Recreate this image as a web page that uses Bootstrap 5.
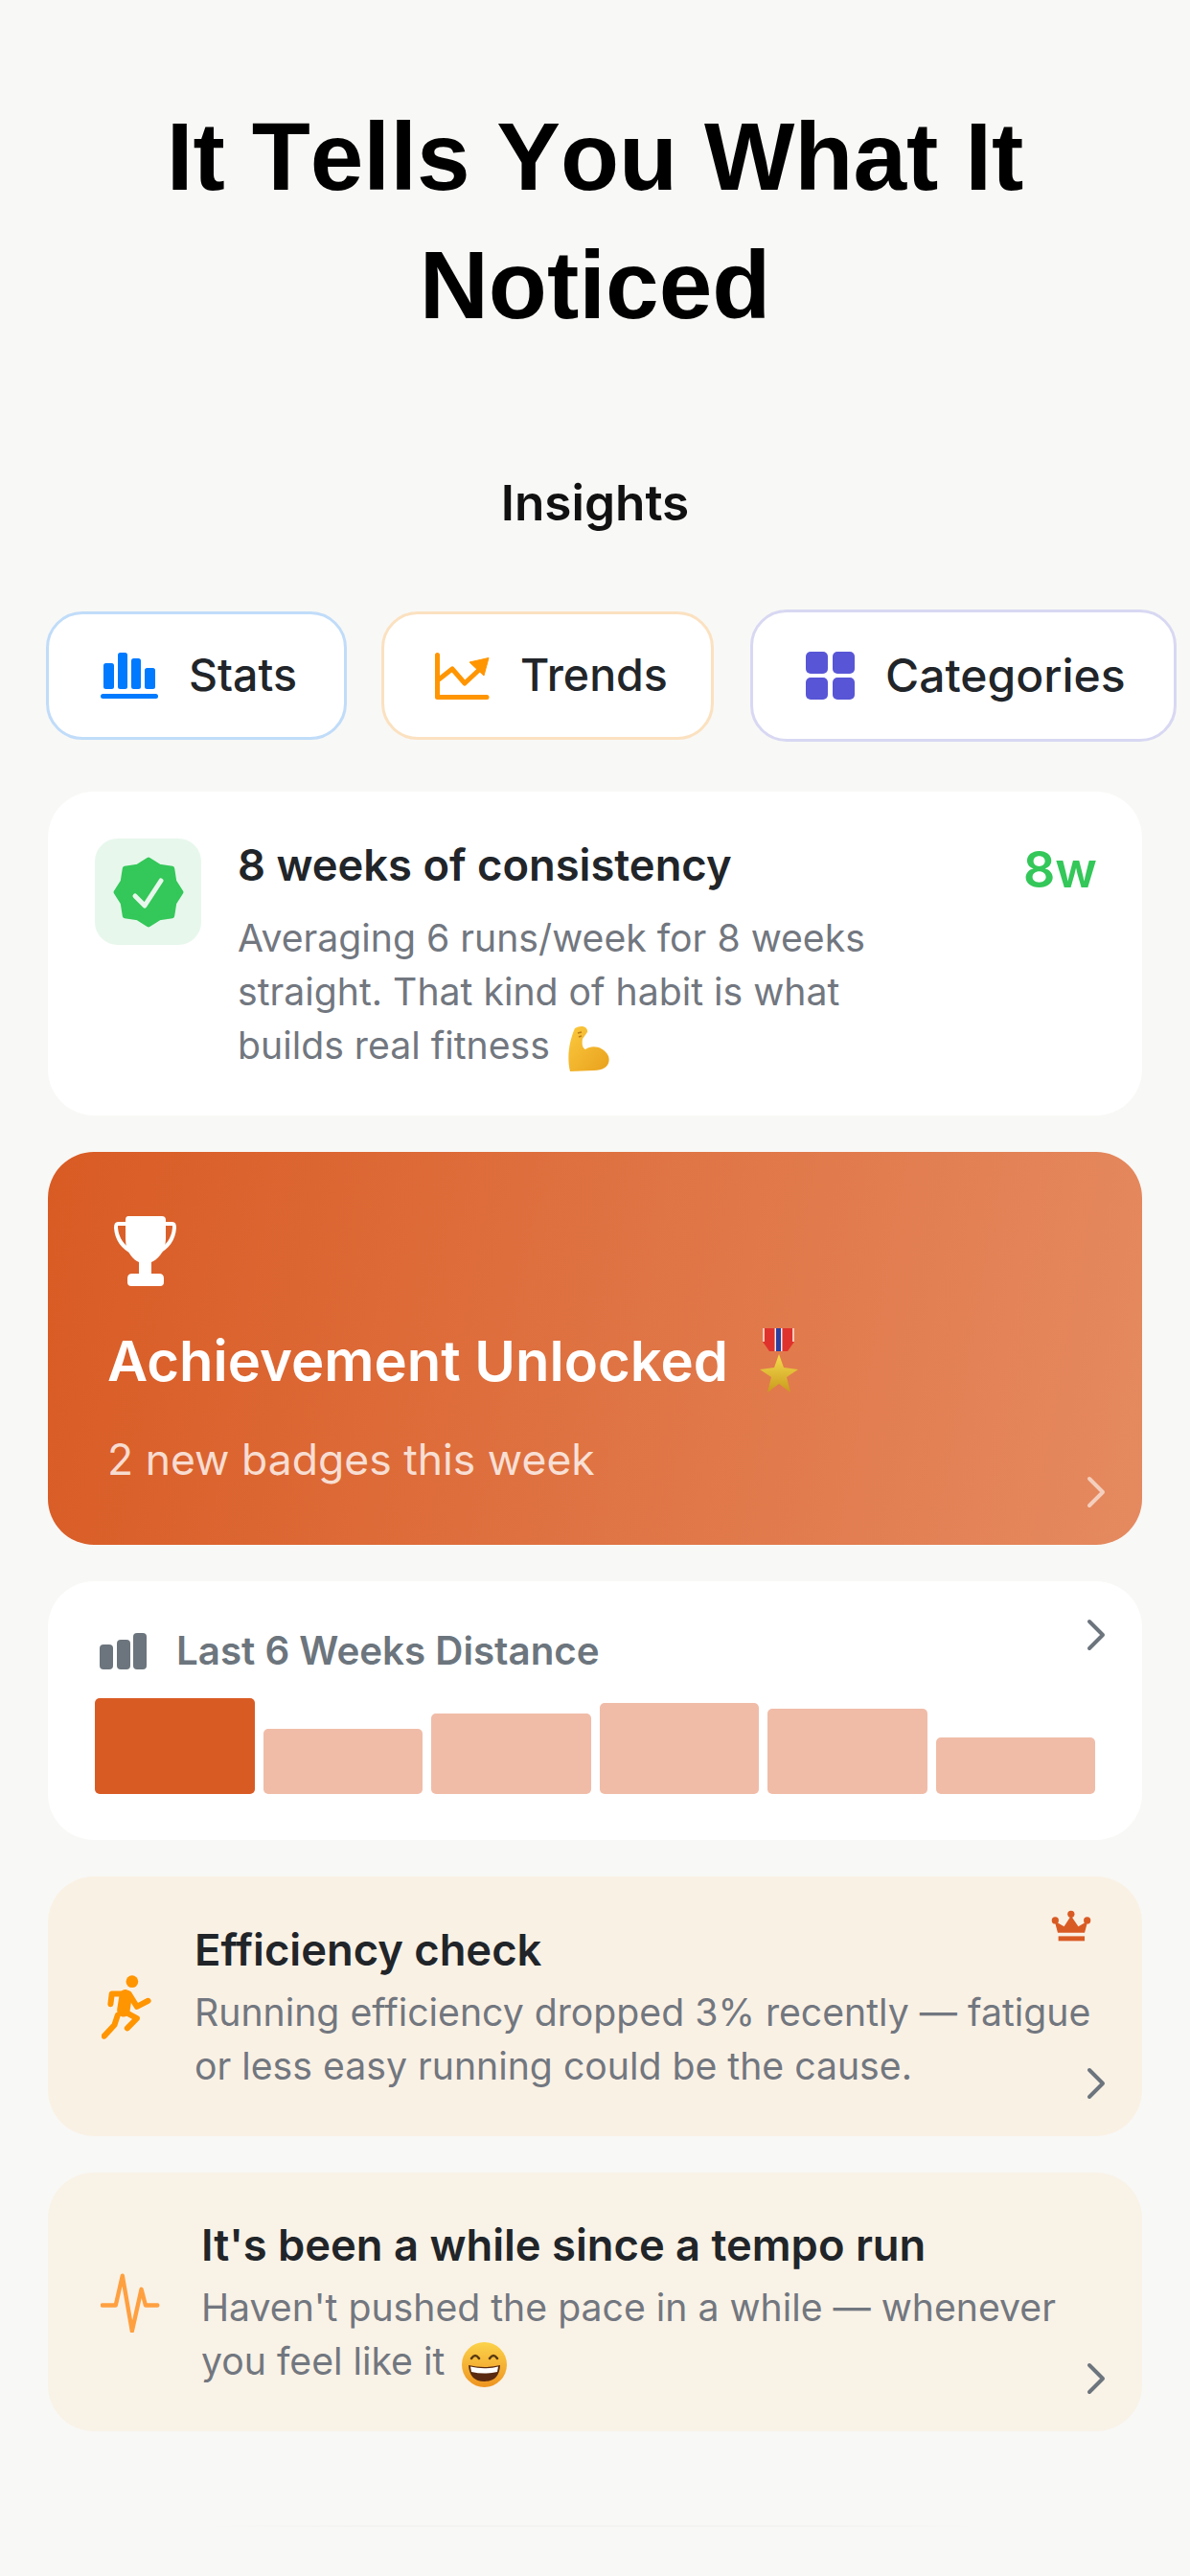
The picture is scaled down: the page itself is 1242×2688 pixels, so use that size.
<!DOCTYPE html>
<html lang="en">
<head>
  <meta charset="UTF-8" />
  <meta name="viewport" content="width=device-width, initial-scale=1.0"/>
  <title>Insights</title>
  <link href="https://cdn.jsdelivr.net/npm/bootstrap@5.3.3/dist/css/bootstrap.min.css" rel="stylesheet" />
  <style>
    body { background: #f8f8f6; font-family: Inter, "Liberation Sans", sans-serif; color: #212529; height: 2688px; overflow: hidden; }

    .hero-title { font-family: "Liberation Sans", Arial, sans-serif; font-weight: 700; font-size: 100px; line-height: 134px; color: #000; margin: 0; padding-top: 96px; font-kerning: none; }
    .page-label { font-size: 51.3px; font-weight: 600; line-height: 60px; color: #111; margin: 130px 0 82px; }

    .chip-row { padding-left: 48px; height: 138px; gap: 36px; }
    .chip { background: #fff; border: 3px solid; border-radius: 38px; height: 134px; font-size: 46.5px; font-weight: 500; gap: 32px; }
    .chip-stats { border-color: #c0dcf9; width: 314px; padding-left: 54px; }
    .chip-trends { border-color: #fbe1c0; width: 347px; padding-left: 53px; }
    .chip-cats { border-color: #d8d8f3; width: 445px; height: 138px; padding-left: 55px; margin-left: 2px; font-size: 48px; }

    .card-stack { margin: 52px 50px 0; gap: 38px; }
    .soft-card { border: 0; border-radius: 48px; background: #fff; position: relative; }

    .streak-card { padding: 49px 47px 45px 49px; gap: 38px; }
    .streak-tile { width: 111px; height: 111px; background: #e7f7ec; border-radius: 24px; flex: none; }
    .streak-text { width: 680px; }
    .item-title { font-size: 45.3px; font-weight: 600; line-height: 56px; color: #212529; }
    .item-desc { font-size: 39.2px; line-height: 56px; color: #72777f; }
    .streak-desc { margin-top: 20px; }
    .streak-value { font-size: 52px; font-weight: 600; line-height: 64px; color: #34c759; margin-top: 1px; }

    .badge-card { background: linear-gradient(100deg, #d95b24, #e58a60) !important; padding: 67px 62px 64px; color: #fff; }
    .badge-trophy { margin-left: 7px; display: block; }
    .badge-title { font-size: 58px; font-weight: 600; line-height: 70px; margin-top: 43px; gap: 33px; }
    .badge-sub { font-size: 44.5px; line-height: 50px; margin-top: 43px; color: rgba(255,255,255,.78); }

    .chart-card { padding: 53px 49px 48px; }
    .chart-head { height: 40px; padding-left: 5px; gap: 31px; font-size: 40.3px; font-weight: 600; color: #6c757d; }
    .chart-bars { height: 100px; margin-top: 29px; gap: 9px; }
    .chart-bar { flex: 1; background: #f0bca8; border-radius: 5px; }
    .chart-bar-now { background: #d95b24; }

    .tip-card { background: #faf1e5; padding: 52px 50px 45px 56px; gap: 45px; }
    .tip-card-alt { background: #f9f2e7; padding: 51px 50px 45px 55px; gap: 43px; }
    .tip-card .item-title { line-height: 50px; }
    .tip-card .item-desc { margin-top: 12px; }
    .tip-icon { margin-bottom: 5px; }

    .go-arrow { position: absolute; right: 38px; width: 20px; height: 34px; }
    .crown-mark { position: absolute; right: 53px; top: 35px; }
    .inline-emoji { vertical-align: middle; margin-left: 5px; }
    .bottom-fade { height: 2px; margin: 98px 220px 0; background: linear-gradient(90deg, transparent, #f3f3f1 20%, #f3f3f1 80%, transparent); }
  </style>
</head>
<body>
  <main>
    <h1 class="hero-title text-center">It Tells You What It Noticed</h1>
    <div class="page-label text-center">Insights</div>

    <!-- chips -->
    <div class="chip-row d-flex align-items-center">
      <div class="chip chip-stats d-flex align-items-center">
        <svg class="flex-shrink-0" width="60" height="48" viewBox="0 0 60 48" fill="#007aff"><rect x="3" y="11" width="11" height="27" rx="2.5"/><rect x="18" y="0" width="10" height="38" rx="2.5"/><rect x="32" y="6" width="10" height="32" rx="2.5"/><rect x="46" y="16" width="11" height="22" rx="2.5"/><rect x="0" y="43" width="60" height="5" rx="2.5"/></svg>
        <span>Stats</span>
      </div>
      <div class="chip chip-trends d-flex align-items-center">
        <svg class="flex-shrink-0" width="57" height="49" viewBox="0 0 57 49"><path d="M2.5 2.5V46.5H54" fill="none" stroke="#ff9500" stroke-width="5" stroke-linecap="round" stroke-linejoin="round"/><path d="M4 28L18 17L31 32L46 18" fill="none" stroke="#ff9500" stroke-width="5" stroke-linecap="round" stroke-linejoin="round"/><path d="M36 10L56 5.5L51 24Z" fill="#ff9500" stroke="#ff9500" stroke-width="1" stroke-linejoin="round"/></svg>
        <span>Trends</span>
      </div>
      <div class="chip chip-cats d-flex align-items-center">
        <svg class="flex-shrink-0" width="51" height="50" viewBox="0 0 51 50" fill="#5856d6"><rect width="23" height="23" rx="5"/><rect x="28" width="23" height="23" rx="5"/><rect y="27" width="23" height="23" rx="5"/><rect x="28" y="27" width="23" height="23" rx="5"/></svg>
        <span>Categories</span>
      </div>
    </div>

    <div class="card-stack d-flex flex-column">
      <!-- streak -->
      <div class="card soft-card streak-card flex-row align-items-start">
        <div class="streak-tile d-flex align-items-center justify-content-center">
          <svg width="76" height="76" viewBox="0 0 76 76"><path d="M72 38L64.8 49.1L62.7 62.7L49.1 64.8L38 72L26.9 64.8L13.3 62.7L11.2 49.1L4 38L11.2 26.9L13.3 13.3L26.9 11.2L38 4L49.1 11.2L62.7 13.3L64.8 26.9Z" fill="#34c759" stroke="#34c759" stroke-width="5" stroke-linejoin="round"/><path d="M24 42L34 52L51 26" fill="none" stroke="#e7f7ec" stroke-width="5" stroke-linecap="round" stroke-linejoin="round"/></svg>
        </div>
        <div class="streak-text">
          <div class="item-title">8 weeks of consistency</div>
          <div class="item-desc streak-desc">Averaging 6 runs/week for 8 weeks straight. That kind of habit is what builds real fitness
            <svg class="inline-emoji" width="48" height="48" viewBox="0 0 48 48"><defs><linearGradient id="armGrad" x1="0" y1="0" x2="1" y2="1"><stop offset="0" stop-color="#fbc93d"/><stop offset="1" stop-color="#e9a11d"/></linearGradient></defs><path d="M10 3C16 -1 24 1 23 7L18 14C17 20 18 24 21 25C28 20 40 22 45 32C48 42 40 47 30 47L5 48C1 32 5 14 10 3Z" fill="url(#armGrad)"/><path d="M13 8L17 7M14 12L17 11" stroke="#b97c12" stroke-width="1.5"/></svg>
          </div>
        </div>
        <div class="streak-value ms-auto">8w</div>
      </div>

      <!-- achievement -->
      <div class="card soft-card badge-card">
        <svg class="badge-trophy" width="65" height="73" viewBox="0 0 65 73"><path d="M15 0H50Q54 0 54 4V24C54 38 44 46 39 48V60H47Q52 60 52 65V69Q52 73 48 73H18Q14 73 14 69V65Q14 60 19 60H26V48C21 46 12 38 12 24V4Q12 0 15 0Z" fill="#fff"/><path d="M13 8H4C2 8 2 10 2 12C3 26 12 34 20 38M52 8H61C63 8 63 10 63 12C62 26 53 34 45 38" fill="none" stroke="#fff" stroke-width="4" stroke-linecap="round"/></svg>
        <div class="badge-title d-flex align-items-center">
          <span>Achievement Unlocked</span>
          <svg class="flex-shrink-0" width="40" height="68" viewBox="0 0 40 68"><defs><linearGradient id="starGrad" x1="0" y1="0" x2="0" y2="1"><stop offset="0" stop-color="#f6dc4e"/><stop offset="1" stop-color="#c99a1d"/></linearGradient></defs><path d="M3 0H36V14L29 24H10L3 14Z" fill="#e0322c"/><rect x="3" width="2" height="14" fill="#f6c9b8"/><rect x="34" width="2" height="14" fill="#f6c9b8"/><rect x="15.5" width="8" height="24" fill="#f2e7e0"/><rect x="17" width="5" height="24" fill="#2b3f9e"/><path d="M20 27L25 41L40 43L28 51L32 67L20 58L8 67L12 51L0 43L15 41Z" fill="url(#starGrad)"/></svg>
        </div>
        <div class="badge-sub">2 new badges this week</div>
        <svg class="go-arrow" style="bottom:38px" viewBox="0 0 20 34"><path d="M3 3L17 17L3 31" fill="none" stroke="#fff" stroke-opacity=".6" stroke-width="4" stroke-linecap="round" stroke-linejoin="round"/></svg>
      </div>

      <!-- distance -->
      <div class="card soft-card chart-card">
        <div class="chart-head d-flex align-items-center">
          <svg class="flex-shrink-0" width="49" height="38" viewBox="0 0 49 38" fill="#6c757d"><rect y="12" width="14" height="26" rx="4"/><rect x="18" y="7" width="14" height="31" rx="4"/><rect x="35" width="14" height="38" rx="4"/></svg>
          <span>Last 6 Weeks Distance</span>
        </div>
        <div class="chart-bars d-flex align-items-end">
          <div class="chart-bar chart-bar-now" style="height:100px"></div>
          <div class="chart-bar" style="height:68px"></div>
          <div class="chart-bar" style="height:84px"></div>
          <div class="chart-bar" style="height:95px"></div>
          <div class="chart-bar" style="height:89px"></div>
          <div class="chart-bar" style="height:59px"></div>
        </div>
        <svg class="go-arrow" style="top:39px" viewBox="0 0 20 34"><path d="M3 3L17 17L3 31" fill="none" stroke="#6c757d" stroke-width="4" stroke-linecap="round" stroke-linejoin="round"/></svg>
      </div>

      <!-- efficiency -->
      <div class="card soft-card tip-card flex-row align-items-center">
        <svg class="flex-shrink-0 tip-icon" width="52" height="67" viewBox="50 60 155 200"><circle cx="145" cy="80" r="19" fill="#ff9500"/><g fill="none" stroke="#ff9500" stroke-linecap="round" stroke-linejoin="round"><path d="M125 125L118 170" stroke-width="40"/><path d="M78 150L82 118H135L160 158L195 140" stroke-width="18"/><path d="M100 185L90 215L58 250" stroke-width="18"/><path d="M115 170L160 195L130 225" stroke-width="18"/></g></svg>
        <div>
          <div class="item-title">Efficiency check</div>
          <div class="item-desc">Running efficiency dropped 3% recently — fatigue or less easy running could be the cause.</div>
        </div>
        <svg class="crown-mark" width="42" height="33" viewBox="50 70 125 100" fill="#d95b24"><circle cx="62" cy="103" r="11"/><circle cx="112" cy="83" r="11"/><circle cx="163" cy="103" r="11"/><path d="M70 142L60 105L90 122L112 88L135 122L165 105L155 142Z"/><rect x="72" y="153" width="83" height="15"/></svg>
        <svg class="go-arrow" style="bottom:38px" viewBox="0 0 20 34"><path d="M3 3L17 17L3 31" fill="none" stroke="#6c757d" stroke-width="4" stroke-linecap="round" stroke-linejoin="round"/></svg>
      </div>

      <!-- tempo -->
      <div class="card soft-card tip-card tip-card-alt flex-row align-items-center">
        <svg class="flex-shrink-0 tip-icon" width="62" height="62" viewBox="45 60 185 185"><path d="M50 160H92L113 68L143 240L172 110L185 160H222" fill="none" stroke="#ffa040" stroke-width="13" stroke-linecap="round" stroke-linejoin="round"/></svg>
        <div>
          <div class="item-title">It's been a while since a tempo run</div>
          <div class="item-desc">Haven't pushed the pace in a while — whenever you feel like it
            <svg class="inline-emoji" style="margin-left:7px" width="47" height="47" viewBox="0 0 47 47"><defs><linearGradient id="faceGrad" x1="0" y1="0" x2="0" y2="1"><stop offset="0" stop-color="#fcd34a"/><stop offset="1" stop-color="#ee9420"/></linearGradient></defs><circle cx="23.5" cy="23.5" r="23.5" fill="url(#faceGrad)"/><path d="M10 17Q14 11 18 17M29 17Q33 11 37 17" fill="none" stroke="#5a3a12" stroke-width="2.5" stroke-linecap="round"/><path d="M7 24Q23.5 28 40 24Q39 41 23.5 41Q8 41 7 24Z" fill="#5a2a10"/><path d="M9 25.5Q23.5 29 38 25.5L37 31Q23.5 34 10 31Z" fill="#fff"/></svg>
          </div>
        </div>
        <svg class="go-arrow" style="bottom:38px" viewBox="0 0 20 34"><path d="M3 3L17 17L3 31" fill="none" stroke="#6c757d" stroke-width="4" stroke-linecap="round" stroke-linejoin="round"/></svg>
      </div>
    </div>
    <div class="bottom-fade"></div>
  </main>
  <script src="https://cdn.jsdelivr.net/npm/bootstrap@5.3.3/dist/js/bootstrap.bundle.min.js"></script>
</body>
</html>
